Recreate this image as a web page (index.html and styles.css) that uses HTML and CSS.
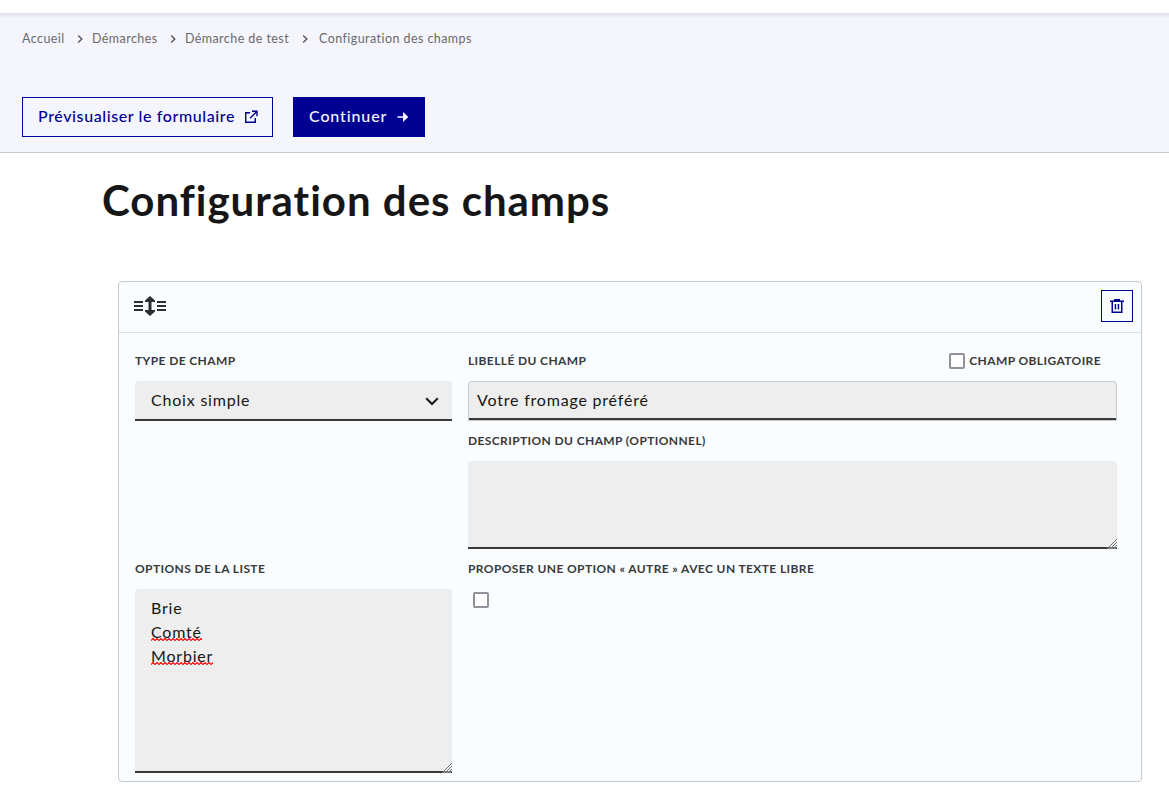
FILE: index.html
```html
<!DOCTYPE html>
<html lang="fr">
<head>
<meta charset="utf-8">
<title>Configuration des champs</title>
<link rel="stylesheet" href="styles.css">
</head>
<body>
<header class="topbar"></header>
<section class="band">
  <nav class="crumbs">
    <span>Accueil</span>
    <svg class="chev" viewBox="0 0 6 8"><path d="M1.200.5 4.800 4 1.200 7.500"/></svg>
    <span>Démarches</span>
    <svg class="chev" viewBox="0 0 6 8"><path d="M1.200.5 4.800 4 1.200 7.500"/></svg>
    <span>Démarche de test</span>
    <svg class="chev last" viewBox="0 0 6 8"><path d="M1.200.5 4.800 4 1.200 7.500"/></svg>
    <span>Configuration des champs</span>
  </nav>
  <div class="actions">
    <a class="btn secondary"><span>Prévisualiser le formulaire</span>
      <svg width="14" height="14" viewBox="0 0 14 14"><path d="M6 2.700H1.700v9.600h9.600V8" /><path d="M8 1.200h5v5M12.600 1.600 6 8.200"/></svg>
    </a>
    <a class="btn primary"><span>Continuer</span>
      <svg width="12" height="12" viewBox="0 0 12 12"><path d="M.5 5.200H6V1l5.300 5L6 11V6.800H.5z"/></svg>
    </a>
  </div>
</section>
<main>
  <h1>Configuration des champs</h1>
  <section class="card">
    <div class="card-head">
      <svg class="drag" width="34" height="22" viewBox="0 0 34 22"><path d="M1 6h9v2H1zm0 4h9v2H1zm0 4h9v2H1zM24 6h9v2h-9zm0 4h9v2h-9zm0 4h9v2h-9zM17 1l5 4.500V7h-3.500v8H22v1.500L17 21l-5-4.500V15h3.500V7H12V5.500z"/></svg>
      <button class="trash" aria-label="Supprimer"><svg width="14" height="14" viewBox="0 0 14 14"><path fill-rule="evenodd" d="M4 0h6v1.500h4V3h-1.500v11h-11V3H0V1.500h4zM3 3v9.500h8V3zm1.700 2h1.500v5.500H4.700zm3 0h1.500v5.500H7.700z"/></svg></button>
    </div>
    <div class="fields">
      <div>
        <label>Type de champ</label>
        <div class="select"><span>Choix simple</span><svg width="14" height="9" viewBox="0 0 14 9"><path d="m1.200 1.200 5.800 5.800 5.800-5.800"/></svg></div>
      </div>
      <div>
        <div class="label-row"><label>Libellé du champ</label><label class="required"><i class="check"></i><span>Champ obligatoire</span></label></div>
        <div class="input"><span>Votre fromage préféré</span></div>
        <label class="below">Description du champ (optionnel)</label>
        <textarea class="area description"></textarea>
      </div>
      <div>
        <label>Options de la liste</label>
        <div class="area options">Brie<br><span class="typo">Comté</span><br><span class="typo">Morbier</span></div>
      </div>
      <div>
        <label>Proposer une option « Autre » avec un texte libre</label>
        <i class="check alone"></i>
      </div>
    </div>
  </section>
</main>
</body>
</html>
```
FILE: styles.css
```css
* { box-sizing: border-box; }
body { margin: 0; height: 807px; overflow: hidden; background: #fff; color: #161616; font: 16px/24px Lato, sans-serif; letter-spacing: .8px; }
.topbar { height: 13px; }
.band { height: 140px; padding: 16px 22px 0; background: linear-gradient(#dfdfe9, #f5f5fe 5px); border-bottom: 1px solid #c8c8cf; }
.crumbs { display: flex; align-items: center; height: 20px; font-size: 12.5px; color: #6a6a6a; white-space: nowrap; letter-spacing: .43px; }
.chev { width: 6px; height: 8px; margin: 0 9.300px 0 12px; fill: none; stroke: #555; stroke-width: 1.400; }
.last { margin: 0 11.500px 0 12.500px; }
.actions { display: flex; gap: 20px; margin-top: 48px; }
.btn { display: flex; align-items: center; height: 40px; padding: 0 14px 2px 15px; border: 1px solid #000091; color: #000091; font-weight: 500; letter-spacing: .6px; white-space: nowrap; }
.secondary { width: 251px; }
.primary { width: 132px; padding-right: 15px; background: #000091; color: #f5f5fe; letter-spacing: .88px; }
.btn svg { margin-left: auto; position: relative; top: 1px; }
.secondary path { fill: none; stroke: currentColor; stroke-width: 1.400; }
.primary path { fill: currentColor; }
main { padding: 23px 27px 0 102px; }
h1 { margin: 0; font-size: 42px; line-height: 48px; font-weight: 700; letter-spacing: .98px; }
.card { width: 1024px; height: 501px; margin: 57px 0 0 16px; border: 1px solid #c9c9c9; border-radius: 4px; background: #f9fdff; }
.card-head { display: flex; align-items: center; justify-content: space-between; height: 51px; padding: 0 8px 2px 14px; border-bottom: 1px solid #d5e4ee; }
.drag { fill: #2c2f30; }
.trash { display: grid; place-items: center; width: 32px; height: 32px; padding: 0; border: 1px solid #000091; background: none; }
.trash path { fill: #000091; }
.fields { display: grid; grid-template-columns: 317px 649px; column-gap: 16px; padding: 16px; }
label { display: flex; align-items: center; height: 24px; font-size: 12px; font-weight: 700; color: #3a3a3a; text-transform: uppercase; white-space: nowrap; letter-spacing: .39px; }
.label-row { display: flex; justify-content: space-between; padding-right: 16px; }
.required { gap: 4px; }
.check { display: block; width: 16px; height: 16px; border: 2px solid #929099; border-radius: 2px; background: #fff; }
.alone { margin: 11px 0 0 5px; }
.select, .input { display: flex; align-items: center; height: 40px; margin-top: 8px; border-radius: 4px 4px 0 0; background: #eee; }
.select { justify-content: space-between; padding: 0 13px 2px 16px; box-shadow: inset 0 -2px #3a3a3a; }
.select svg { margin-top: 2px; }
.select path { fill: none; stroke: #161616; stroke-width: 2; }
.input { padding: 0 8px 2px; border: 1px solid #c9c9c9; box-shadow: inset 0 -2px #3a3a3a; }
.below { margin-top: 8px; }
.area { display: block; width: 100%; margin: 8px 0 0; padding: 7px 16px; border: 0; border-radius: 4px 4px 0 0; background: #eee; box-shadow: inset 0 -2px #3a3a3a; resize: both; overflow: auto; font: inherit; }
.area::-webkit-resizer { background: url("data:image/svg+xml,%3Csvg xmlns='http://www.w3.org/2000/svg' width='15' height='15'%3E%3Cpath d='M5 15l10-10M8 15l7-7M11 15l4-4' stroke='%23707070'/%3E%3Cpath d='M6.500 15l8.500-8.500M9.500 15l5.500-5.500M12.500 15l2.500-2.500' stroke='%23fff' stroke-width='.7'/%3E%3C/svg%3E") no-repeat right bottom; }
.description { height: 88px; margin-bottom: 8px; }
.options { height: 184px; }
.typo { background: url("data:image/svg+xml,%3Csvg xmlns='http://www.w3.org/2000/svg' width='4' height='3'%3E%3Cpath d='M-1 1.500 0 2.500 2 .5 4 2.500 5 1.500' fill='none' stroke='%23f00' stroke-width='1.100'/%3E%3C/svg%3E") repeat-x left bottom; }
```
